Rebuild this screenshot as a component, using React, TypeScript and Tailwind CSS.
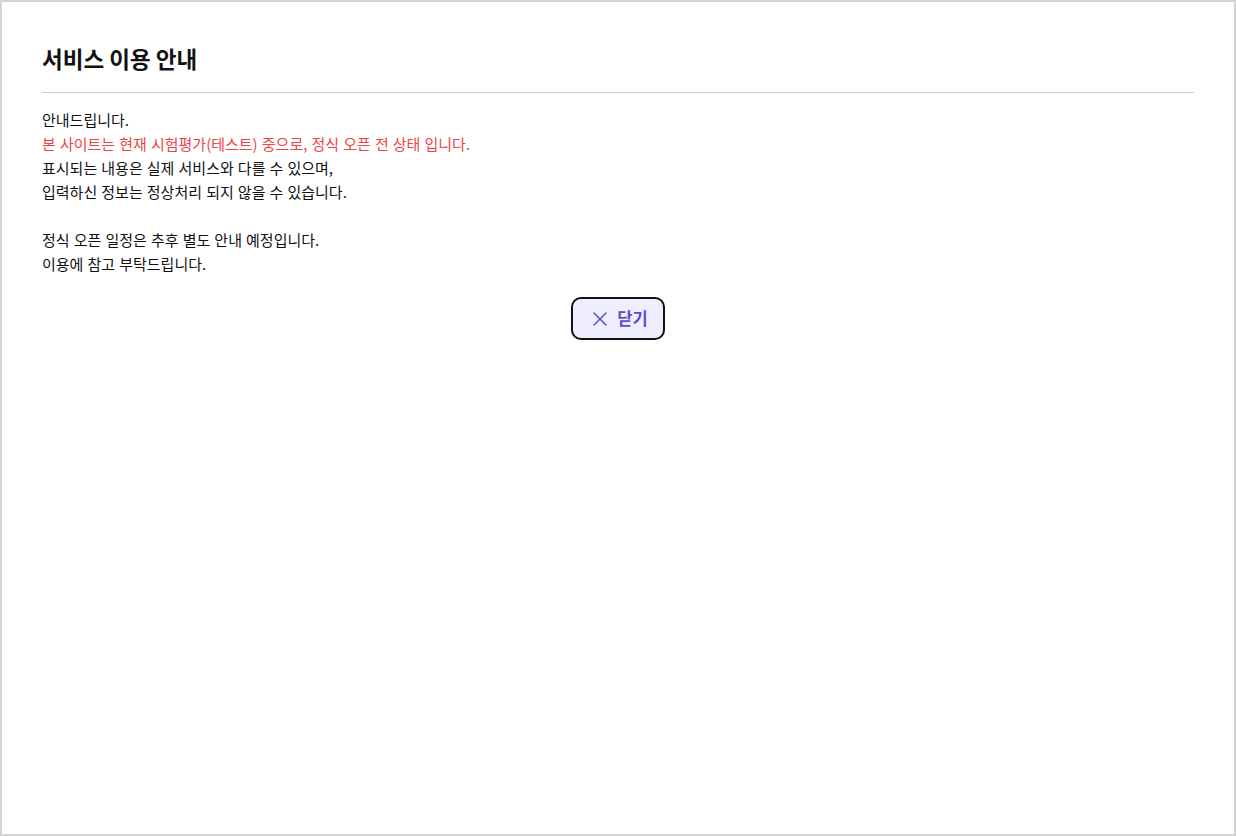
import { X } from 'lucide-react'

const lines = [
  { text: '안내드립니다.', red: false },
  { text: '본 사이트는 현재 시험평가(테스트) 중으로, 정식 오픈 전 상태 입니다.', red: true },
  { text: '표시되는 내용은 실제 서비스와 다를 수 있으며,', red: false },
  { text: '입력하신 정보는 정상처리 되지 않을 수 있습니다.', red: false },
  { text: '', red: false },
  { text: '정식 오픈 일정은 추후 별도 안내 예정입니다.', red: false },
  { text: '이용에 참고 부탁드립니다.', red: false },
]

export default function App() {
  return (
    <div
      className="flex h-[836px] w-full flex-col border-2 border-[#d4d4d4] bg-white px-10 pt-10 text-[#111]"
      style={{ fontFamily: '"Noto Sans CJK KR", "Noto Sans", sans-serif' }}
    >
      <h1 className="border-b border-[#cccccc] pb-[18px] text-[22.5px] leading-[32px] font-bold">
        서비스 이용 안내
      </h1>
      <div className="mt-[15px] text-[15px] leading-[24px] [word-spacing:0.75px]">
        {lines.map((line, i) => (
          <p key={i} className={line.red ? 'text-[#ef4444]' : ''}>
            {line.text || '\u00a0'}
          </p>
        ))}
      </div>
      <div className="mt-[21px] flex justify-center">
        <button className="flex h-[43px] items-center gap-[5px] rounded-[10px] border-2 border-[#111] bg-[#eeeeff] px-[15px] text-[16.5px] font-bold text-[#5b4fc7]">
          <X size={24} strokeWidth={1.5} />
          <span>닫기</span>
        </button>
      </div>
    </div>
  )
}
